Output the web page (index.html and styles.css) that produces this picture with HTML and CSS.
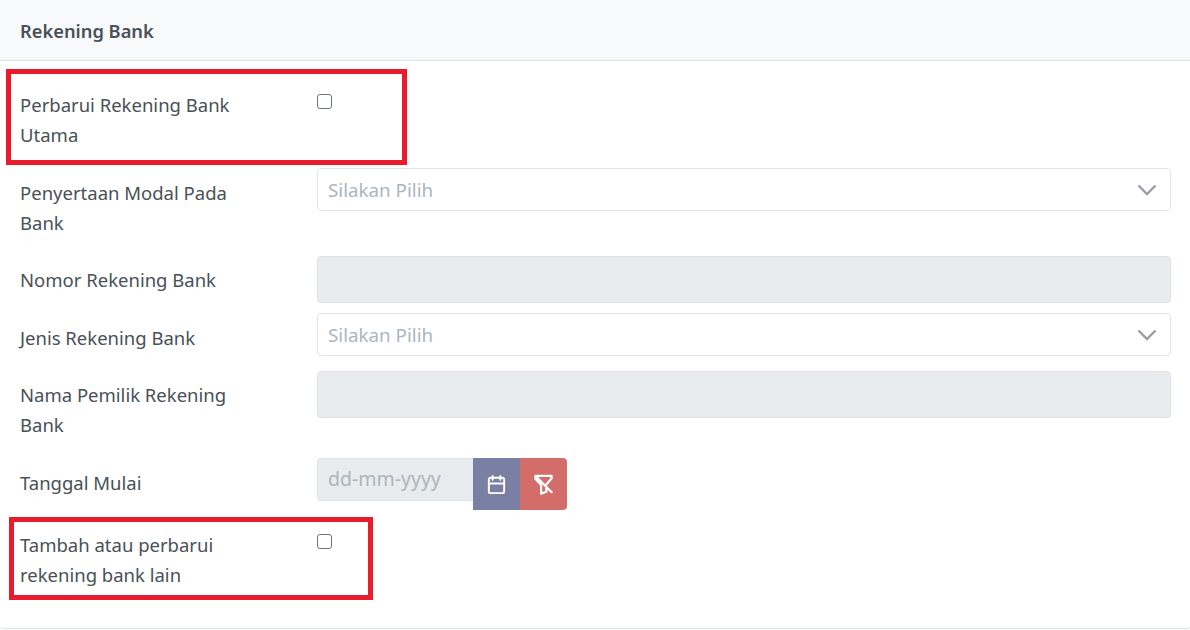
FILE: index.html
```html
<!DOCTYPE html>
<html lang="id">
<head>
    <meta charset="UTF-8">
    <title>Rekening Bank</title>
    <link rel="stylesheet" href="styles.css">
</head>
<body>
    <div class="card">
        <div class="card-header">Rekening Bank</div>
        <div class="card-body">
            <div class="form-row">
                <label class="form-label">Perbarui Rekening Bank Utama</label>
                <div class="form-control-wrap"><input type="checkbox" class="check"></div>
            </div>
            <div class="form-row">
                <label class="form-label">Penyertaan Modal Pada Bank</label>
                <div class="form-control-wrap">
                    <div class="select">
                        <span>Silakan Pilih</span>
                        <svg class="chevron" viewBox="0 0 20 12"><path d="M1.500 1.500 10 10l8.500-8.500"/></svg>
                    </div>
                </div>
            </div>
            <div class="form-row">
                <label class="form-label">Nomor Rekening Bank</label>
                <div class="form-control-wrap"><div class="input-disabled"></div></div>
            </div>
            <div class="form-row">
                <label class="form-label">Jenis Rekening Bank</label>
                <div class="form-control-wrap">
                    <div class="select">
                        <span>Silakan Pilih</span>
                        <svg class="chevron" viewBox="0 0 20 12"><path d="M1.500 1.500 10 10l8.500-8.500"/></svg>
                    </div>
                </div>
            </div>
            <div class="form-row">
                <label class="form-label">Nama Pemilik Rekening Bank</label>
                <div class="form-control-wrap"><div class="input-disabled"></div></div>
            </div>
            <div class="form-row">
                <label class="form-label">Tanggal Mulai</label>
                <div class="form-control-wrap">
                    <div class="date-group">
                        <div class="date-input">dd-mm-yyyy</div>
                        <button class="btn btn-calendar" type="button">
                            <svg class="icon" viewBox="0 0 24 24"><path d="M4 7a2 2 0 0 1 2-2h12a2 2 0 0 1 2 2v12a2 2 0 0 1-2 2H6a2 2 0 0 1-2-2V7zM16 3v4M8 3v4M4 11h16"/></svg>
                        </button>
                        <button class="btn btn-clear" type="button">
                            <svg class="icon icon-filter" viewBox="0 0 24 24"><path d="M3.500 3h17v2.500L15 12m0 3.500V19.500L9.500 21.500V12.500L3.500 6V3M3.500 3 20.500 20"/></svg>
                        </button>
                    </div>
                </div>
            </div>
            <div class="form-row">
                <label class="form-label">Tambah atau perbarui rekening bank lain</label>
                <div class="form-control-wrap"><input type="checkbox" class="check"></div>
            </div>
        </div>

        <!-- Kotak merah penanda -->
        <div class="mark mark-top"></div>
        <div class="mark mark-bottom"></div>
    </div>
</body>
</html>
```

FILE: styles.css
```css
* {
    margin: 0;
    padding: 0;
    box-sizing: border-box;
}

body {
    font-family: "Noto Sans", sans-serif;
    font-size: 18.5px;
    line-height: 30px;
    color: #495057;
    background-color: #ffffff;
    overflow: hidden;
}

.card {
    position: relative;
    width: 1191px;
    height: 629px;
    border-bottom: 1px solid #dee2e6;
    border-radius: 0 0 4px 4px;
}

.card-header {
    height: 61px;
    padding: 16px 20px 0;
    font-size: 18.3px;
    font-weight: 600;
    background-color: #f8f9fa;
    border-bottom: 1px solid #dee2e6;
}

.card-body {
    padding: 19.5px 20px 0;
}

.form-row {
    display: flex;
}

.form-label {
    width: 297px;
    flex: none;
    padding: 9.5px 60px 18px 0;
}

.form-control-wrap {
    flex: 1;
    margin-bottom: 10px;
}

.check {
    display: block;
    width: 15px;
    height: 15px;
    margin-top: 13.5px;
    appearance: none;
    background-color: #ffffff;
    border: 1px solid #6c757d;
    border-radius: 3px;
}

.select {
    display: flex;
    align-items: center;
    justify-content: space-between;
    height: 43px;
    padding: 0 13px 0 10px;
    font-size: 18.8px;
    color: #adb5bd;
    background-color: #ffffff;
    border: 1px solid #e2e5e8;
    border-radius: 4px;
}

.chevron {
    width: 20px;
    height: 12px;
    fill: none;
    stroke: #9a9fa4;
    stroke-width: 2.4;
}

.input-disabled {
    height: 47px;
    background-color: #e9ecef;
    border: 1px solid #dee2e6;
    border-radius: 4px;
}

.date-group {
    display: flex;
    align-items: flex-start;
    width: 250px;
}

.date-input {
    width: 156px;
    height: 43px;
    padding: 5px 10px;
    font-size: 19.5px;
    color: #adb5bd;
    background-color: #e9ecef;
    border: 1px solid #dee2e6;
    border-right: none;
    border-radius: 4px 0 0 4px;
}

.btn {
    display: flex;
    align-items: center;
    justify-content: center;
    width: 47px;
    height: 52px;
    border: none;
}

.btn-calendar {
    background-color: #7a80a3;
}

.btn-clear {
    background-color: #d26d69;
    border-radius: 0 4px 4px 0;
}

.icon {
    width: 23px;
    height: 23px;
    fill: none;
    stroke: #ffffff;
    stroke-width: 2;
    stroke-linecap: round;
    stroke-linejoin: round;
}

.icon-filter {
    stroke-width: 2.3;
}

.mark {
    position: absolute;
    border: 5px solid #e81c2a;
}

.mark-top {
    left: 6px;
    top: 69px;
    width: 401px;
    height: 96px;
}

.mark-bottom {
    left: 9px;
    top: 517px;
    width: 364px;
    height: 83px;
}
```
